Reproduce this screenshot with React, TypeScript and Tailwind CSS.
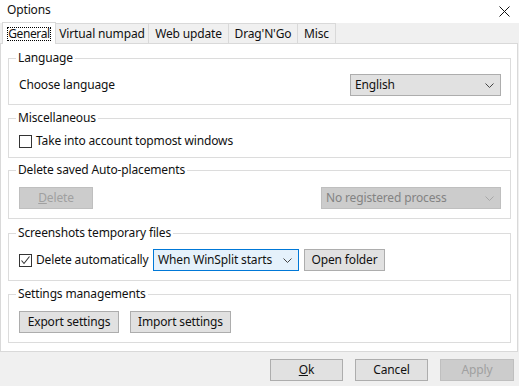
import type { ReactNode } from "react";

function Chevron({ color = "#444" }: { color?: string }) {
  return (
    <svg width="9" height="5" viewBox="0 0 9 5" className="shrink-0">
      <polyline points="0.5,0.5 4.5,4.5 8.5,0.5" fill="none" stroke={color} strokeWidth="1" />
    </svg>
  );
}

function Group({ title, className, children }: { title: string; className?: string; children: ReactNode }) {
  return (
    <fieldset className={`ml-[7px] w-[503px] border border-[#dcdcdc] ${className ?? ""}`}>
      <legend className="ml-[7px] px-[2px] leading-[16px]">{title}</legend>
      {children}
    </fieldset>
  );
}

function Button({ children, w, disabled }: { children: ReactNode; w: string; disabled?: boolean }) {
  return (
    <div
      className={`${w} h-[22px] flex items-center justify-center border ${
        disabled ? "bg-[#cccccc] border-[#bfbfbf] text-[#a0a0a0]" : "bg-[#e1e1e1] border-[#adadad]"
      }`}
    >
      {children}
    </div>
  );
}

function Checkbox({ checked }: { checked?: boolean }) {
  return (
    <div className="w-[13px] h-[13px] border border-[#333333] bg-white flex items-center justify-center shrink-0">
      {checked && (
        <svg width="11" height="11" viewBox="0 0 11 11">
          <polyline points="1.5,5.5 4,8.5 9.5,1.5" fill="none" stroke="#333" strokeWidth="1.1" />
        </svg>
      )}
    </div>
  );
}

const tabs = ["Virtual numpad", "Web update", "Drag'N'Go", "Misc"];
const tabWidths = ["w-[93px]", "w-[80px]", "w-[69px]", "w-[38px]"];

export default function App() {
  return (
    <div className="w-[519px] h-[386px] bg-[#f0f0f0] flex flex-col text-[12px] tracking-[-0.15px] text-[#111] font-['Noto_Sans','Open_Sans',sans-serif] overflow-hidden">
      {/* title bar */}
      <div className="h-[23px] bg-white flex items-center justify-between pl-[7px] pr-[9px] pb-[3px]">
        <span>Options</span>
        <svg width="11" height="11" viewBox="0 0 11 11" className="mt-[3px]">
          <path d="M0.5 0.5 L10.5 10.5 M10.5 0.5 L0.5 10.5" stroke="#111" strokeWidth="1" />
        </svg>
      </div>

      {/* tabs */}
      <div className="h-[20px] flex items-end pl-[2px]">
        <div className="relative z-10 w-[54px] h-[22px] -mb-[1px] bg-white border border-b-0 border-[#d9d9d9] flex items-center justify-center">
          <span className="border border-dotted border-black px-0 tracking-[-0.4px] leading-[12px] h-[14px]">General</span>
        </div>
        {tabs.map((t, i) => (
          <div
            key={t}
            className={`${tabWidths[i]} h-[20px] border border-l-0 border-b-0 border-[#d9d9d9] flex items-center justify-center`}
          >
            {t}
          </div>
        ))}
      </div>

      {/* tab page */}
      <div className="w-[518px] h-[309px] bg-white border border-[#d9d9d9] pt-[6px]">
        <Group title="Language">
          <div className="flex items-center justify-between pl-[10px] pr-[9px] pt-[8px] pb-[8px]">
            <span>Choose language</span>
            <div className="w-[151px] h-[22px] bg-[#e1e1e1] border border-[#adadad] flex items-center justify-between pl-[4px] pr-[6px]">
              <span>English</span>
              <Chevron />
            </div>
          </div>
        </Group>

        <Group title="Miscellaneous" className="mt-[5px]">
          <div className="flex items-center gap-[4px] pl-[10px] pt-[7px] pb-[8px] h-[31px]">
            <Checkbox />
            <span>Take into account topmost windows</span>
          </div>
        </Group>

        <Group title="Delete saved Auto-placements" className="mt-[4px]">
          <div className="flex items-center justify-between pl-[10px] pr-[9px] pt-[9px] pb-[9px]">
            <Button w="w-[74px]" disabled>
              <span>
                <span className="underline">D</span>elete
              </span>
            </Button>
            <div className="w-[180px] h-[22px] bg-[#cccccc] border border-[#bfbfbf] text-[#838383] flex items-center justify-between pl-[4px] pr-[6px]">
              <span>No registered process</span>
              <Chevron color="#a8a8a8" />
            </div>
          </div>
        </Group>

        <Group title="Screenshots temporary files" className="mt-[6px]">
          <div className="flex items-center pl-[10px] pt-[8px] pb-[9px]">
            <Checkbox checked />
            <span className="ml-[4px] w-[117px]">Delete automatically</span>
            <div className="w-[146px] h-[22px] bg-[#e5f1fb] border border-[#0078d7] flex items-center justify-between pl-[4px] pr-[6px]">
              <span>When WinSplit starts</span>
              <Chevron />
            </div>
            <div className="ml-[5px]">
              <Button w="w-[81px]">Open folder</Button>
            </div>
          </div>
        </Group>

        <Group title="Settings managements" className="mt-[5px]">
          <div className="flex items-center gap-[11px] pl-[10px] pt-[9px] pb-[9px]">
            <Button w="w-[100px]">Export settings</Button>
            <Button w="w-[101px]">Import settings</Button>
          </div>
        </Group>
      </div>

      {/* bottom buttons */}
      <div className="flex justify-end gap-[12px] pt-[7px] pr-[5px]">
        <Button w="w-[73px]">
          <span>
            <span className="underline">O</span>k
          </span>
        </Button>
        <Button w="w-[73px]">Cancel</Button>
        <Button w="w-[74px]" disabled>
          Apply
        </Button>
      </div>
    </div>
  );
}
